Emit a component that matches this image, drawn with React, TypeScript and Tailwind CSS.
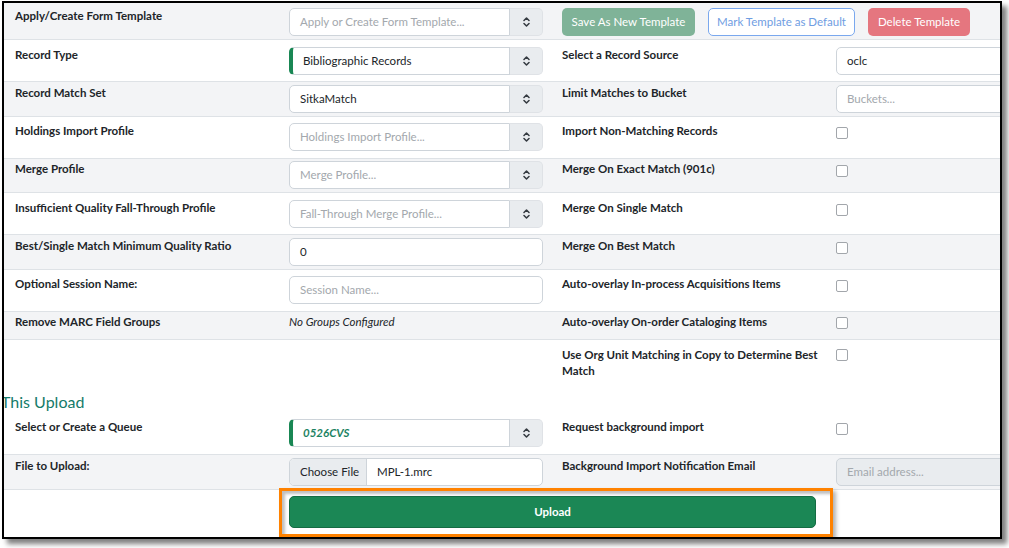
import clsx from "clsx";
import type { ReactNode } from "react";

const Chevrons = () => (
  <svg width="7" height="10" viewBox="0 0 7 10" fill="none" stroke="#343a40" strokeWidth="1.5" strokeLinecap="round" strokeLinejoin="round">
    <path d="M1 3.5 L3.5 1 L6 3.5" />
    <path d="M1 6.5 L3.5 9 L6 6.5" />
  </svg>
);

interface SelectProps {
  value?: string;
  placeholder?: string;
  accent?: boolean;
  queue?: boolean;
}

const SelectBox = ({ value, placeholder, accent, queue }: SelectProps) => (
  <div className="flex h-[28px] w-[254px] shrink-0">
    <div
      className={clsx(
        "flex w-[221px] items-center rounded-l-[5px] border border-[#ced4da] bg-white pl-[10px]",
        accent && "border-l-[4px] border-l-[#198754]"
      )}
    >
      {value ? (
        <span className={clsx(queue ? "font-bold italic text-[#1d8363]" : "text-[#212529]")}>{value}</span>
      ) : (
        <span className="text-[#a3a8ad]">{placeholder}</span>
      )}
    </div>
    <div className="flex flex-1 items-center justify-center rounded-r-[5px] border border-l-0 border-[#dfe2e6] bg-[#e9ecef]">
      <Chevrons />
    </div>
  </div>
);

const TextBox = ({ value, placeholder, disabled }: { value?: string; placeholder?: string; disabled?: boolean }) => (
  <div
    className={clsx(
      "flex h-[28px] w-[254px] shrink-0 items-center rounded-[5px] border border-[#ced4da] pl-[10px]",
      disabled ? "bg-[#e9ecef]" : "bg-white"
    )}
  >
    {value ? <span>{value}</span> : <span className="text-[#a3a8ad]">{placeholder}</span>}
  </div>
);

const Check = ({ className }: { className?: string }) => (
  <div className={clsx("h-[12px] w-[12px] shrink-0 rounded-[2px] border border-[#a2a6ab] bg-white", className ?? "mt-[4px]")} />
);

const Row = ({ className, children }: { className?: string; children: ReactNode }) => (
  <div className={clsx("flex items-start", className)}>{children}</div>
);

const Label = ({ children }: { children?: ReactNode }) => (
  <div className="w-[285px] shrink-0 pl-[11px] font-bold leading-[16px]">{children}</div>
);

const Label2 = ({ children }: { children?: ReactNode }) => (
  <div className="ml-[19px] w-[274px] shrink-0 pr-[12px] font-bold leading-[16px]">{children}</div>
);

export default function App() {
  return (
    <div className="h-[548px] w-[1009px] overflow-hidden bg-white pl-[2px] pt-[1px]">
      <div className="h-[538px] w-[1000px] overflow-hidden border-2 border-black bg-white font-['Lato',sans-serif] text-[11.5px] text-[#212529] shadow-[5px_5px_5px_rgba(0,0,0,0.5)]">
        <Row className="border-b border-[#dee2e6] bg-[#f3f4f6] pb-[3px] pt-[5px]">
          <Label>Apply/Create Form Template</Label>
          <SelectBox placeholder="Apply or Create Form Template..." />
          <div className="ml-[19px] flex shrink-0 gap-[13px]">
            <div className="flex h-[28px] w-[133px] items-center justify-center rounded-[5px] bg-[#7fb398] text-white">
              Save As New Template
            </div>
            <div className="flex h-[28px] w-[147px] items-center justify-center rounded-[5px] border border-[#7aa8ee] bg-white text-[#6f9de2]">
              Mark Template as Default
            </div>
            <div className="flex h-[28px] w-[102px] items-center justify-center rounded-[5px] bg-[#e5767f] text-white">
              Delete Template
            </div>
          </div>
        </Row>

        <Row className="border-b border-[#dee2e6] bg-white pb-[6px] pt-[7px]">
          <Label>Record Type</Label>
          <SelectBox value="Bibliographic Records" accent />
          <Label2>Select a Record Source</Label2>
          <TextBox value="oclc" />
        </Row>

        <Row className="border-b border-[#dee2e6] bg-[#f3f4f6] pb-[3px] pt-[3px]">
          <Label>Record Match Set</Label>
          <SelectBox value="SitkaMatch" />
          <Label2>Limit Matches to Bucket</Label2>
          <TextBox placeholder="Buckets..." />
        </Row>

        <Row className="border-b border-[#dee2e6] bg-white pb-[7px] pt-[6px]">
          <Label>Holdings Import Profile</Label>
          <SelectBox placeholder="Holdings Import Profile..." />
          <Label2>Import Non-Matching Records</Label2>
          <Check />
        </Row>

        <Row className="border-b border-[#dee2e6] bg-[#f3f4f6] pb-[3px] pt-[2px]">
          <Label>Merge Profile</Label>
          <SelectBox placeholder="Merge Profile..." />
          <Label2>Merge On Exact Match (901c)</Label2>
          <Check />
        </Row>

        <Row className="border-b border-[#dee2e6] bg-white pb-[6px] pt-[7px]">
          <Label>Insufficient Quality Fall-Through Profile</Label>
          <SelectBox placeholder="Fall-Through Merge Profile..." />
          <Label2>Merge On Single Match</Label2>
          <Check />
        </Row>

        <Row className="border-b border-[#dee2e6] bg-[#f3f4f6] pb-[3px] pt-[3px]">
          <Label>Best/Single Match Minimum Quality Ratio</Label>
          <TextBox value="0" />
          <Label2>Merge On Best Match</Label2>
          <Check />
        </Row>

        <Row className="border-b border-[#dee2e6] bg-white pb-[7px] pt-[6px]">
          <Label>Optional Session Name:</Label>
          <TextBox placeholder="Session Name..." />
          <Label2>Auto-overlay In-process Acquisitions Items</Label2>
          <Check />
        </Row>

        <Row className="h-[28px] border-b border-[#dee2e6] bg-[#f3f4f6] pt-[2px]">
          <Label>Remove MARC Field Groups</Label>
          <div className="w-[254px] shrink-0 italic leading-[16px]">No Groups Configured</div>
          <Label2>Auto-overlay On-order Cataloging Items</Label2>
          <Check className="mt-[3px]" />
        </Row>

        <Row className="bg-white pb-[13px] pt-[7px]">
          <Label />
          <div className="w-[254px] shrink-0" />
          <Label2>Use Org Unit Matching in Copy to Determine Best Match</Label2>
          <Check className="mt-[2px]" />
        </Row>

        <h2 className="-ml-[3px] h-[20px] text-[16px] leading-[20px] text-[#157b69]">This Upload</h2>

        <Row className="border-b border-[#dee2e6] bg-white pb-[7px] pt-[7px]">
          <Label>Select or Create a Queue</Label>
          <SelectBox value="0526CVS" accent queue />
          <Label2>Request background import</Label2>
          <Check />
        </Row>

        <Row className="border-b border-[#dee2e6] bg-[#f3f4f6] pb-[3px] pt-[3px]">
          <Label>File to Upload:</Label>
          <div className="flex h-[28px] w-[254px] shrink-0 overflow-hidden rounded-[5px] border border-[#ced4da] bg-white">
            <div className="flex w-[77px] items-center border-r border-[#ced4da] bg-[#e9ecef] pl-[10px]">Choose File</div>
            <div className="flex items-center pl-[10px]">MPL-1.mrc</div>
          </div>
          <Label2>Background Import Notification Email</Label2>
          <TextBox placeholder="Email address..." disabled />
        </Row>

        <div className="-mt-[2px] ml-[275px] h-[49px] w-[554px] border-[3px] border-[#ff8200] bg-white pl-[7px] pt-[5px] shadow-[3px_3px_4px_rgba(0,0,0,0.3),inset_3px_3px_3px_rgba(0,0,0,0.25)]">
          <button className="flex h-[32px] w-[527px] items-center justify-center rounded-[5px] border border-[#146c43] bg-[#1b8755] font-bold text-white">
            Upload
          </button>
        </div>
      </div>
    </div>
  );
}
